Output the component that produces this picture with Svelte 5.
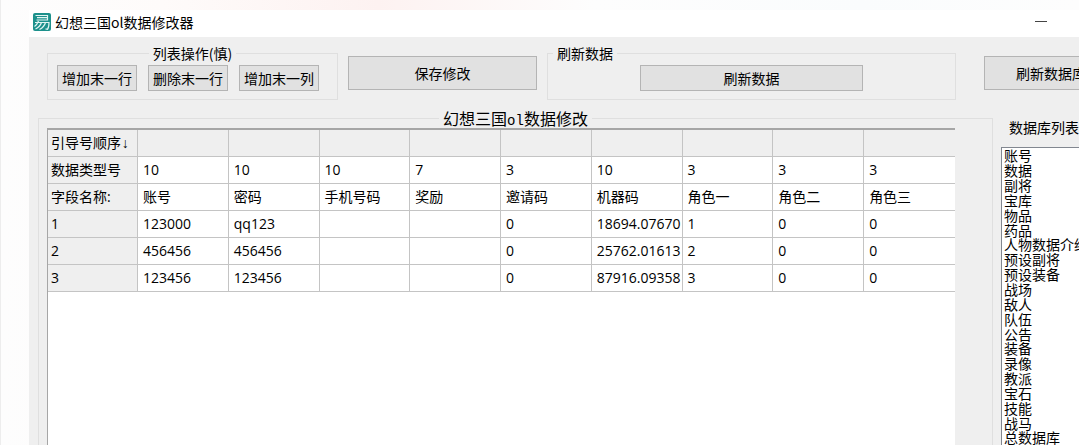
<script>
  const typeRow = ['10', '10', '10', '7', '3', '10', '3', '3', '3'];
  const nameRow = ['账号', '密码', '手机号码', '奖励', '邀请码', '机器码', '角色一', '角色二', '角色三'];
  const records = [
    ['123000', 'qq123', '', '', '0', '18694.07670', '1', '0', '0'],
    ['456456', '456456', '', '', '0', '25762.01613', '2', '0', '0'],
    ['123456', '123456', '', '', '0', '87916.09358', '3', '0', '0']
  ];
  const databases = [
    '账号', '数据', '副将', '宝库', '物品', '药品', '人物数据介绍', '预设副将', '预设装备', '战场',
    '敌人', '队伍', '公告', '装备', '录像', '教派', '宝石', '技能', '战马', '总数据库'
  ];
</script>

<div class="desktop">
  <main class="window">
    <header class="titlebar">
      <svg class="logo" viewBox="0 0 18 18" aria-hidden="true">
        <rect width="18" height="18" rx="2" fill="#1d918c" />
        <g fill="none" stroke="#e2f5f3" stroke-width="1.2">
          <path d="M2.500 2.500H14.500V7H3.500M4 4.700H14.500" />
          <path d="M2 9.500H16C16 12.500 15.500 15 14.500 16.300L12.500 15.800M5.500 8C4.500 10.500 3.500 12 1.500 13.500M8.500 9.500C7.500 12.500 5.500 14.500 2.500 16M12.500 9.500C11.500 13 9.500 15 6.500 16.500" />
        </g>
      </svg>
      <h1>幻想三国ol数据修改器</h1>
      <button class="minimize" aria-label="最小化"></button>
    </header>

    <div class="toolbar">
      <fieldset class="ops">
        <legend>列表操作(慎)</legend>
        <div class="ops-row">
          <button class="btn">增加末一行</button>
          <button class="btn">删除末一行</button>
          <button class="btn">增加末一列</button>
        </div>
      </fieldset>
      <button class="btn tall save">保存修改</button>
      <fieldset class="refresh">
        <legend>刷新数据</legend>
        <div class="refresh-row"><button class="btn">刷新数据</button></div>
      </fieldset>
      <div class="refresh-db">
        <button class="btn tall">刷新数据库</button>
      </div>
    </div>

    <div class="content">
      <fieldset class="editor">
        <legend>幻想三国<span class="latin">ol</span>数据修改</legend>
        <div class="grid">
          <table>
            <thead>
              <tr>
                <th scope="row">引导号顺序<span class="arrow">↓</span></th>
                {#each typeRow as _}<td></td>{/each}
              </tr>
            </thead>
            <tbody>
              <tr>
                <th scope="row">数据类型号</th>
                {#each typeRow as value}<td>{value}</td>{/each}
              </tr>
              <tr>
                <th scope="row">字段名称:</th>
                {#each nameRow as value}<td>{value}</td>{/each}
              </tr>
              {#each records as record, i}
                <tr>
                  <th scope="row">{i + 1}</th>
                  {#each record as value}<td>{value}</td>{/each}
                </tr>
              {/each}
            </tbody>
          </table>
        </div>
      </fieldset>

      <div class="sidebar">
        <label for="databases">数据库列表</label>
        <select id="databases" size="20">
          {#each databases as name}<option>{name}</option>{/each}
        </select>
      </div>
    </div>
  </main>
</div>

<style>
  :global(body) {
    margin: 0;
  }

  .desktop,
  .desktop * {
    box-sizing: border-box;
  }

  .desktop {
    display: flex;
    height: 100vh;
    padding: 10px 0 0 28px;
    overflow: hidden;
    border-left: 1px solid #ededed;
    background: linear-gradient(90deg, #fdfdfd 0%, #fefbfa 15%, #fdf2f1 35%, #fdfdfd 55%, #fafcfd 80%, #fdfdfd 100%);
    color: #000;
    font: 14px/18px "Noto Sans CJK SC", sans-serif;
  }

  .window {
    display: flex;
    flex: 1;
    flex-direction: column;
    min-width: 0;
    background: #efefef;
  }

  .titlebar {
    display: flex;
    align-items: center;
    height: 27px;
    padding: 0 32px 4px 4px;
    background: #fff;
  }

  .logo {
    width: 18px;
    height: 18px;
  }

  h1 {
    flex: 1;
    margin: 0 0 0 4px;
    font-size: 14px;
    font-weight: 400;
    line-height: 18px;
  }

  .minimize {
    width: 12px;
    height: 12px;
    padding: 0;
    border: 0;
    background: linear-gradient(#444, #444) center / 12px 1px no-repeat;
  }

  fieldset {
    min-width: 0;
    margin: 0;
    padding: 0;
    border: 1px solid #dfdfdf;
  }

  legend {
    padding: 0 4px;
    line-height: 18px;
  }

  .btn {
    height: 26px;
    padding: 0;
    border: 1px solid #b4b4b4;
    background: #e1e1e1;
    color: #000;
    font: inherit;
    white-space: nowrap;
  }

  .tall {
    height: 34px;
  }

  .toolbar {
    display: flex;
    gap: 10px;
    padding: 7px 0 8px 18px;
  }

  .ops legend,
  .editor legend {
    margin: 0 auto;
  }

  .ops-row {
    display: flex;
    gap: 11px;
    padding: 3px 18px 8px 9px;
  }

  .ops-row .btn {
    width: 80px;
  }

  .save {
    width: 189px;
    margin-top: 12px;
  }

  .refresh {
    flex: 1;
  }

  .refresh legend {
    margin-left: 5px;
  }

  .refresh-row {
    display: flex;
    justify-content: center;
    padding: 3px 0 8px;
  }

  .refresh-row .btn {
    width: 55%;
  }

  .refresh-db {
    width: 95px;
    margin: 12px 0 0 18px;
    overflow: hidden;
  }

  .refresh-db .btn {
    width: 134px;
  }

  .content {
    display: flex;
    flex: 1;
    gap: 8px;
    min-height: 0;
    padding-left: 9px;
  }

  .editor {
    display: flex;
    flex: 1;
    flex-direction: column;
    border-bottom: 0;
  }

  .editor legend {
    font-size: 16px;
    line-height: 20px;
  }

  .latin,
  .arrow {
    font-family: "Liberation Mono", monospace;
    font-size: 14px;
    line-height: 1;
  }

  .grid {
    flex: 1;
    margin: 0 37px 0 8px;
    overflow: hidden;
    border-top: 2px solid #a6a6a6;
    border-left: 1px solid #a6a6a6;
    background: #fff;
  }

  table {
    width: 100%;
    border-spacing: 0;
    table-layout: fixed;
    font-family: "Open Sans", "Noto Sans CJK SC", sans-serif;
  }

  th,
  td {
    height: 27px;
    padding: 0 0 0 5px;
    overflow: hidden;
    border-right: 1px solid #c4c4c4;
    border-bottom: 1px solid #c4c4c4;
    font-weight: 400;
    line-height: 18px;
    text-align: left;
    white-space: nowrap;
  }

  th {
    width: 90px;
    padding-left: 3px;
    background: #efefef;
  }

  td:last-child {
    border-right: 0;
  }

  thead td {
    background: #efefef;
  }

  .sidebar {
    display: flex;
    flex-direction: column;
    width: 78px;
    padding-top: 10px;
  }

  label {
    margin: 0 0 11px 8px;
    white-space: nowrap;
  }

  select {
    flex: 1;
    min-height: 0;
    padding: 0;
    overflow: hidden;
    border: 1px solid #828790;
    border-width: 1px 0 0 1px;
    border-radius: 0;
    background: #fff;
    color: #000;
    font: inherit;
    scrollbar-width: none;
  }

  option {
    display: flex;
    align-items: center;
    height: 5%;
    min-height: 0;
    padding: 0 2px;
  }
</style>
